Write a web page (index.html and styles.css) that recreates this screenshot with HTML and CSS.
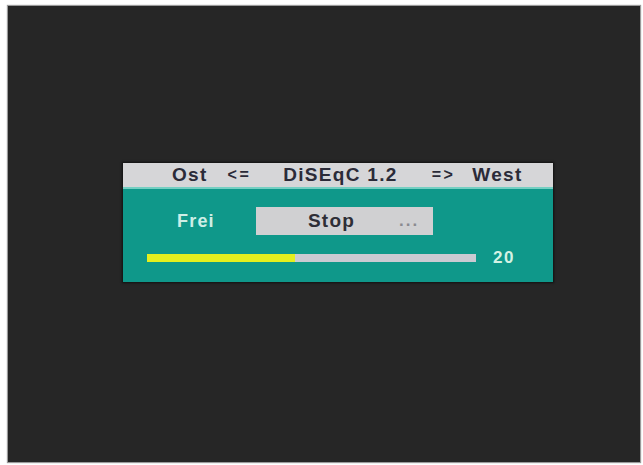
FILE: index.html
```html
<!DOCTYPE html>
<html>
<head>
<meta charset="utf-8">
<link rel="stylesheet" href="styles.css">
</head>
<body>
<div class="screen">
  <div class="panel">
    <div class="header">
      <span class="h-ost">Ost</span>
      <span class="h-arrow h-left">&lt;=</span>
      <span class="h-title">DiSEqC 1.2</span>
      <span class="h-arrow h-right">=&gt;</span>
      <span class="h-west">West</span>
    </div>
    <div class="body">
      <div class="row">
        <span class="label">Frei</span>
        <div class="button">
          <span class="btn-text">Stop</span>
          <span class="btn-dots">...</span>
        </div>
      </div>
      <div class="progress-row">
        <div class="track"><div class="fill" style="width:45%"></div></div>
        <span class="value">20</span>
      </div>
    </div>
  </div>
</div>
</body>
</html>
```
FILE: styles.css
```css
html, body {
  margin: 0;
  padding: 0;
  background: #ffffff;
}
body {
  font-family: "Liberation Sans", Arial, sans-serif;
  font-weight: bold;
}
.screen {
  margin: 6px 3px 3px 8px;
  width: 632px;
  height: 456px;
  background: #262626;
  box-shadow: 0 0 1px 1px #9a9a9a;
  box-sizing: border-box;
  padding: 157px 0 0 115px;
}
.panel {
  width: 430px;
  height: 119px;
  background: #0f988a;
  display: flex;
  flex-direction: column;
  box-shadow: 0 0 2px 1px #111;
}
.header {
  height: 24px;
  background: #d6d6d8;
  border-bottom: 2px solid #74cfc2;
  display: flex;
  align-items: center;
  color: #2b2b38;
  font-size: 19px;
  letter-spacing: 1.3px;
}
.h-ost { margin-left: 49px; }
.h-arrow { font-size: 16px; letter-spacing: 2.5px; }
.h-left { margin-left: 20px; }
.h-title { margin-left: 32px; letter-spacing: 1.3px; }
.h-right { margin-left: 34px; }
.h-west { margin-left: 17px; letter-spacing: 1.3px; }
.body {
  flex: 1;
  padding: 18px 0 0 0;
  display: flex;
  flex-direction: column;
}
.row {
  display: flex;
  align-items: center;
  height: 28px;
}
.label {
  margin-left: 54px;
  width: 79px;
  color: #cdeee6;
  font-size: 18px;
  letter-spacing: 1.2px;
}
.button {
  width: 177px;
  height: 28px;
  background: #d0d0d2;
  display: flex;
  align-items: center;
  color: #2e2e36;
}
.btn-text {
  margin-left: 52px;
  font-size: 19px;
  letter-spacing: 1.2px;
}
.btn-dots {
  margin-left: 44px;
  font-size: 17px;
  color: #8a8a90;
  letter-spacing: 2px;
}
.progress-row {
  margin-top: 18px;
  display: flex;
  align-items: center;
  height: 9px;
}
.track {
  margin-left: 24px;
  width: 329px;
  height: 8px;
  background: #cacad2;
}
.fill {
  height: 100%;
  background: #e4ef1e;
}
.value {
  margin-left: 17px;
  color: #d4f2e4;
  font-size: 17px;
  letter-spacing: 1.5px;
}
```
